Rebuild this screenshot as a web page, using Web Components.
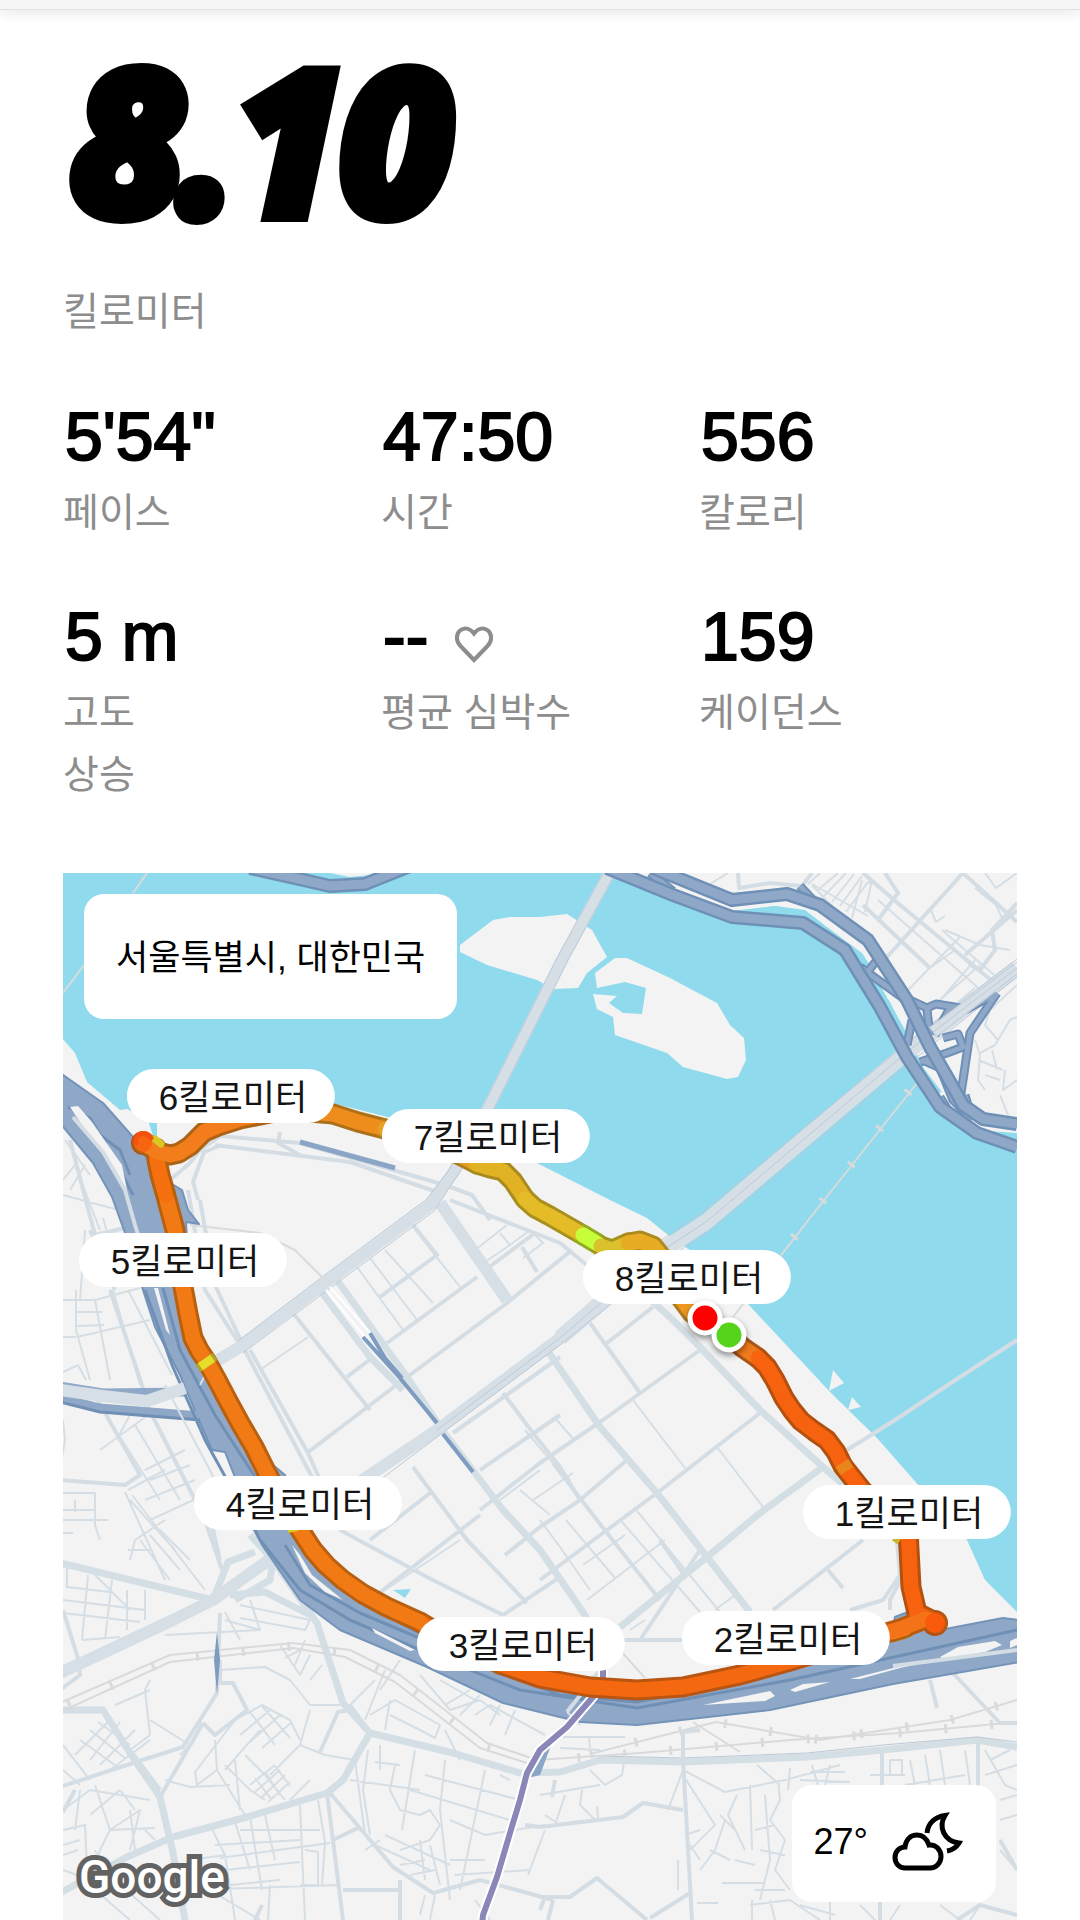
<!DOCTYPE html>
<html lang="ko">
<head>
<meta charset="utf-8">
<meta name="viewport" content="width=device-width, initial-scale=1">
<title>8.10 킬로미터</title>
<style>
  body {
    margin: 0;
    background: #fff;
    color: #000;
    font-family: "Liberation Sans", "Noto Sans CJK KR", sans-serif;
  }
</style>
</head>
<body>
<run-summary>
  <run-distance unit="킬로미터">8.10</run-distance>
  <stat-grid>
    <run-stat label="페이스">5'54"</run-stat>
    <run-stat label="시간">47:50</run-stat>
    <run-stat label="칼로리">556</run-stat>
    <run-stat label="고도&#10;상승">5 m</run-stat>
    <run-stat label="평균 심박수">--<heart-icon slot="icon"></heart-icon></run-stat>
    <run-stat label="케이던스">159</run-stat>
  </stat-grid>
  <route-map>
    <km-pin x="907" y="1512">1킬로미터</km-pin>
    <km-pin x="786" y="1638">2킬로미터</km-pin>
    <km-pin x="521" y="1644">3킬로미터</km-pin>
    <km-pin x="298" y="1503">4킬로미터</km-pin>
    <km-pin x="183" y="1260">5킬로미터</km-pin>
    <km-pin x="231" y="1096">6킬로미터</km-pin>
    <km-pin x="486" y="1136">7킬로미터</km-pin>
    <km-pin x="687" y="1277">8킬로미터</km-pin>
    <map-card slot="place">서울특별시, 대한민국</map-card>
    <map-card slot="weather">27°<weather-icon></weather-icon></map-card>
  </route-map>
</run-summary>

<script>
// Page shell
const summaryTemplate = document.createElement('template');
summaryTemplate.innerHTML = `
<style>
  :host {
    display: block;
  }

  .bar {
    height: 9px;
    background: #f6f6f6;
    border-bottom: 1px solid #e2e2e2;
    box-shadow: 0 2px 14px rgba(0, 0, 0, 0.12);
  }

  main {
    padding: 28px 63px 0;
  }
</style>
<header class="bar"></header>
<main><slot></slot></main>
`;

class RunSummary extends HTMLElement {
  constructor() {
    super();
    this.attachShadow({ mode: 'open' });
    this.shadowRoot.appendChild(summaryTemplate.content.cloneNode(true));
  }
}

// Distance headline
const distanceTemplate = document.createElement('template');
distanceTemplate.innerHTML = `
<style>
  :host {
    display: block;
  }

  h1 {
    margin: 0;
    padding-left: 10px;
    font: italic 700 194px/200px "Open Sans", sans-serif;
    -webkit-text-stroke: 18px #000;
  }

  p {
    margin: 44px 0 0;
    font-size: 39px;
    line-height: 60px;
    color: #8d8d8d;
  }
</style>
<h1><slot></slot></h1>
<p class="unit"></p>
`;

class RunDistance extends HTMLElement {
  constructor() {
    super();
    this.attachShadow({ mode: 'open' });
    this.shadowRoot.appendChild(distanceTemplate.content.cloneNode(true));
  }

  connectedCallback() {
    this.shadowRoot.querySelector('.unit').textContent = this.getAttribute('unit');
  }
}

// Grid of figures
const gridTemplate = document.createElement('template');
gridTemplate.innerHTML = `
<style>
  :host {
    display: grid;
    grid-template-columns: repeat(3, 1fr);
    row-gap: 56px;
    margin: 58px 0 67px;
  }
</style>
<slot></slot>
`;

class StatGrid extends HTMLElement {
  constructor() {
    super();
    this.attachShadow({ mode: 'open' });
    this.shadowRoot.appendChild(gridTemplate.content.cloneNode(true));
  }
}

const statTemplate = document.createElement('template');
statTemplate.innerHTML = `
<style>
  :host {
    display: flex;
    flex-direction: column;
    gap: 10px;
  }

  .value {
    display: flex;
    align-items: center;
    gap: 26px;
    height: 72px;
    padding-left: 2px;
    font-size: 68px;
    line-height: 72px;
    -webkit-text-stroke: 2px #000;
  }

  .label {
    font-size: 39px;
    line-height: 62px;
    color: #8d8d8d;
    white-space: pre-line;
  }
</style>
<div class="value"><span><slot></slot></span><slot name="icon"></slot></div>
<div class="label"></div>
`;

class RunStat extends HTMLElement {
  constructor() {
    super();
    this.attachShadow({ mode: 'open' });
    this.shadowRoot.appendChild(statTemplate.content.cloneNode(true));
  }

  connectedCallback() {
    this.shadowRoot.querySelector('.label').textContent = this.getAttribute('label');
  }
}

// Icons
const heartTemplate = document.createElement('template');
heartTemplate.innerHTML = `
<style>
  :host {
    display: block;
    width: 40px;
    height: 40px;
    margin-top: 16px;
  }

  svg {
    display: block;
  }
</style>
<svg width="40" height="40" viewBox="0 0 40 40" fill="none" stroke="#8d8d8d" stroke-width="4" aria-hidden="true">
  <path d="M20 36 L6.500 22 C1.500 17 2 10 6 6.500 C10 3 16 4 20 9.500 C24 4 30 3 34 6.500 C38 10 38.500 17 33.500 22 Z"/>
</svg>
`;

class HeartIcon extends HTMLElement {
  constructor() {
    super();
    this.attachShadow({ mode: 'open' });
    this.shadowRoot.appendChild(heartTemplate.content.cloneNode(true));
  }
}

const weatherTemplate = document.createElement('template');
weatherTemplate.innerHTML = `
<style>
  :host {
    display: block;
  }

  svg {
    display: block;
  }
</style>
<svg width="72" height="60" viewBox="0 0 72 60" fill="none" stroke="#000" stroke-width="5" aria-hidden="true">
  <path d="M13 56 C7 56 3 51 3 45.500 C3 39 8 35 13 35 C14 27 19 23 25 23 C31 23 35 27 37 33 C44 32 49 38 49 44.500 C49 51 44 56 38 56 Z"/>
  <path d="M35 21 C36 11 43 5 53 3.500 C46 15 52 29 67 31 C64 36 61 38 55 39"/>
</svg>
`;

class WeatherIcon extends HTMLElement {
  constructor() {
    super();
    this.attachShadow({ mode: 'open' });
    this.shadowRoot.appendChild(weatherTemplate.content.cloneNode(true));
  }
}

// White card over the map
const cardTemplate = document.createElement('template');
cardTemplate.innerHTML = `
<style>
  :host {
    display: flex;
    align-items: center;
    justify-content: center;
    gap: 24px;
    box-sizing: border-box;
    background: #fff;
    border-radius: 20px;
    font-size: 35px;
    white-space: nowrap;
  }
</style>
<slot></slot>
`;

class MapCard extends HTMLElement {
  constructor() {
    super();
    this.attachShadow({ mode: 'open' });
    this.shadowRoot.appendChild(cardTemplate.content.cloneNode(true));
  }
}

// Bounds of the drawn map area
const MAP = { x: 63, y: 873, width: 954, height: 1047 };

const pinTemplate = document.createElement('template');
pinTemplate.innerHTML = `
<style>
  :host {
    position: absolute;
    transform: translate(-50%, -50%);
    padding: 4px 28px 0 32px;
    border-radius: 27px;
    background: #fff;
    color: #141414;
    font-size: 35px;
    line-height: 50px;
    white-space: nowrap;
  }
</style>
<slot></slot>
`;

class KmPin extends HTMLElement {
  constructor() {
    super();
    this.attachShadow({ mode: 'open' });
    this.shadowRoot.appendChild(pinTemplate.content.cloneNode(true));
  }

  connectedCallback() {
    const x = Number(this.getAttribute('x'));
    const y = Number(this.getAttribute('y'));
    this.style.left = (x - MAP.x) / MAP.width * 100 + '%';
    this.style.top = (y - MAP.y) / MAP.height * 100 + '%';
  }
}

// Route, one entry per pace colour: [fill, edge, points]
const ROUTE = [
  ['#ef7a1c', '#a9561a', '729,1334 742,1347 758,1358'],
  ['#f7620e', '#b3500f', '758,1358 767,1367 775,1380 784,1398 792,1410 801,1421 814,1431 827,1440 836,1452 843,1466 862,1490 885,1512 908,1530 911,1587 917,1613'],
  ['#ee8a16', '#b0801c', '892,1632 905,1628'],
  ['#f7620e', '#b3500f', '917,1613 937,1623'],
  ['#f47318', '#b85a12', '937,1623 925,1619 900,1629 840,1646'],
  ['#f4690f', '#b85512', '840,1646 787,1662 740,1675 683,1687 637,1690 590,1687 540,1678 500,1664'],
  ['#f4690f', '#b85a12', '500,1664 450,1640 420,1622'],
  ['#f27a14', '#b8600f', '420,1622 387,1607 363,1594 343,1580 326,1565 313,1550 300,1530 282,1502 267,1473 254,1447 240,1423 228,1401 217,1380 207,1362 199,1350 193,1338 188,1314 183,1287 175,1230 167,1200'],
  ['#f6700f', '#b3600f', '166,1196 160,1175 157,1160 156,1148 143,1143'],
  ['#f27d1a', '#ad6316', '143,1143 158,1152 170,1155 179,1153 190,1146 204,1132 218,1126 240,1119 285,1110'],
  ['#ee8c1c', '#ad701a', '285,1110 333,1114 358,1122 385,1129'],
  ['#e6a024', '#ad7f1c', '385,1129 440,1145 477,1164'],
  ['#e0b224', '#a98a1e', '477,1164 490,1168 503,1171 513,1181 525,1199'],
  ['#e3bc28', '#a9901e', '525,1199 535,1208 550,1216 583,1235'],
  ['#c6ff3a', '#90ad24', '583,1235 598,1244'],
  ['#dbc22c', '#a3941e', '601,1246 612,1250 628,1243'],
  ['#e8ac24', '#ad8a1e', '628,1243 640,1241 653,1246 664,1260'],
  ['#ee9820', '#ad7a1e', '664,1260 680,1297 692,1313 705,1318']
];

const svgOpen = `viewBox="${MAP.x} ${MAP.y} ${MAP.width} ${MAP.height}" fill="none" stroke-linejoin="round" aria-hidden="true"`;

function routeMarkup() {
  const line = (points, color, width) =>
    `<polyline points="${points}" stroke="${color}" stroke-width="${width}"/>`;
  return ROUTE.map(([, edge, points]) => line(points, edge, 21)).join('')
    + ROUTE.map(([fill, , points]) => line(points, fill, 15)).join('');
}

const mapTemplate = document.createElement('template');
mapTemplate.innerHTML = `
<style>
  :host {
    display: block;
    position: relative;
    overflow: hidden;
  }

  svg {
    display: block;
    width: 100%;
  }

  .ends {
    position: absolute;
    inset: 0;
    filter: drop-shadow(0 3px 3px rgba(0, 0, 0, 0.45));
  }

  .land { fill: #f3f3f3; }
  .water { fill: #8fdaed; }
  .thin { stroke: #d5dee5; stroke-width: 2; }
  .street { stroke: #d4dde4; stroke-width: 4; }
  .road { stroke: #d4dee5; stroke-width: 7; }
  .avenue { stroke: #d6dfe6; stroke-width: 12; }
  .bridge { stroke: #d6dfe6; stroke-width: 16; }
  .edge { stroke: #bdc9d6; stroke-width: 1; }
  .rail { stroke: #d9dadc; stroke-width: 2; }
  .ties { stroke: #d9dadc; stroke-width: 9; stroke-dasharray: 3 43; }
  .hw-edge { stroke: #6f90b6; stroke-width: 14; }
  .hw { stroke: #90a8c8; stroke-width: 9; }
  .ramp-edge { stroke: #6f90b6; stroke-width: 9; }
  .ramp { stroke: #90a8c8; stroke-width: 5; }
  .mass { fill: #90a8c8; stroke: #7393b8; stroke-width: 2; }
  .lane { stroke: #6f8fb5; stroke-width: 3; }

  .google {
    position: absolute;
    left: 16px;
    bottom: 13px;
    font: 500 46px/60px "Roboto", sans-serif;
    color: #fff;
    -webkit-text-stroke: 10px #626262;
    paint-order: stroke fill;
    stroke-linejoin: round;
  }

  slot[name="place"]::slotted(*) {
    position: absolute;
    top: 21px;
    left: 21px;
    height: 125px;
    padding: 0 32px 4px;
  }

  slot[name="weather"]::slotted(*) {
    position: absolute;
    right: 21px;
    bottom: 18px;
    height: 117px;
    padding: 0 32px 4px 22px;
    font-size: 36px;
  }
</style>
<svg ${svgOpen}>
  <rect class="water" x="63" y="873" width="954" height="1047"/>

  <!-- banks and islands -->
  <path class="land" d="M63 1039 L75 1053 L87 1082 L120 1110 L127 1109 L148 1120 L153 1136 L157 1136 L157 1115 L260 1090 L340 1105 L380 1115 L470 1140 L537 1163 L610 1200 L647 1218 L668 1235 L690 1250 L747 1303 L830 1392 L877 1438 L920 1487 L950 1515 L967 1540 L985 1580 L1017 1612 V1920 H63 Z"/>
  <path class="land" d="M613 873 L680 891 L732 911 L775 906 L805 910 L860 953 L880 985 L905 1030 L922 1065 L945 1105 L975 1130 L1017 1133 V873 Z"/>
  <path class="water" d="M735 911 L775 906 L805 911 L862 953 L872 968 L850 955 L805 922 Z M876 984 L890 1002 L906 1035 L903 1046 L880 1005 Z M922 1066 L942 1092 L938 1093 L924 1072 Z"/>
  <path class="land" d="M460 945 L493 920 L510 917 H540 L567 914 L592 930 L607 957 L587 973 L578 988 L553 989 L537 980 L487 965 L460 952 Z"/>
  <path class="land" d="M595 973 L615 958 H627 L670 978 L717 1003 L730 1025 L744 1038 L746 1060 L738 1077 L727 1079 L683 1067 L667 1053 L615 1035 L613 1017 L597 1009 L593 994 L617 996 L609 1003 L623 1013 L642 1014 L646 988 L625 982 L597 988 Z"/>
  <path class="land" d="M833 1370 L844 1383 L829 1391 Z M852 1397 L861 1407 L848 1410 Z M330 873 L350 877 L392 873 Z"/>
  <path class="water" d="M393 1590 L411 1589 L405 1598 Z"/>

  <!-- streets in the north east -->
  <path class="thin" d="M710 884 L728 873 M812 885 L850 925 L887 957 M820 873 L808 884 M818 890 L838 873 M824 896 L846 873 M832 902 L854 874 M840 906 L862 876 M846 912 L868 882 L873 884 M852 918 L862 880 M812 884 L868 916 M865 912 L872 880 M878 900 L992 1000 M908 990 L960 937 M930 1012 L975 960 M940 1000 L980 965 M958 1002 L975 988 M942 930 L1000 980 M930 968 L955 950 L975 970 M945 930 L980 945 L1010 950 M930 908 L936 922 L945 916 M975 888 L996 905 L1003 920 M985 873 L996 888 L1017 873 M990 1010 L985 1025 L998 1040 M1017 985 L990 1010 M975 1040 L980 1055 L978 1080 L985 1090 M980 1053 L995 1045 L1010 1020 L1017 1017 M992 1050 L997 1070 M978 1060 L1003 1070 M985 1075 L1000 1080 M1005 1070 L1003 1090 L1017 1080 M1000 1095 L1008 1115"/>
  <path class="street" d="M863 873 L900 905 L997 985 M963 873 L887 957 M863 905 L930 968 M963 873 L1017 922 M1017 903 L992 930 L995 950 L980 970 M738 873 L739 888 L770 883 L802 886 L812 873 M885 873 L898 893 L878 920 M1017 910 L965 955"/>

  <!-- island blocks -->
  <path class="thin" d="M260 1370 L308 1337 M357 1267 L403 1330 M370 1258 L417 1320 M385 1250 L433 1303 M413 1227 L460 1287 M475 1250 L507 1225 M485 1262 L510 1245 L500 1233 M510 1245 L530 1230 L543 1243 L523 1258 M533 1500 L573 1473 M540 1520 L560 1547 L590 1590 M566 1520 L615 1578 M583 1565 L625 1535 M587 1600 L665 1540 M607 1533 L640 1575 M622 1522 L700 1612 M637 1511 L720 1612 M553 1463 L525 1430 M540 1442 L570 1480 M555 1418 L575 1441 M633 1400 L685 1468 M717 1447 L763 1507 M715 1610 L735 1595 M630 1630 L645 1620 M500 1500 L540 1470 M520 1490 L550 1515 M382 1592 L460 1540"/>
  <path class="street" d="M387 1343 L477 1277 M307 1453 L403 1380 L507 1303 L572 1250 M293 1313 L370 1410 M347 1377 L373 1357 M243 1347 L312 1477 M250 1350 L308 1453 L320 1480 M380 1297 L437 1255 L413 1225 M488 1268 L535 1233 M522 1247 L537 1272 M450 1200 L560 1243 L583 1262 L605 1280 M453 1433 L560 1357 M480 1470 L560 1415 M503 1393 L533 1433 L560 1467 L580 1500 M413 1467 L467 1540 L527 1603 M370 1540 L430 1493 M340 1530 L427 1577 L503 1615 M560 1577 L503 1615 M480 1515 L370 1600 M590 1323 L640 1393 M653 1307 L607 1343 M700 1350 L603 1420 L540 1463 L480 1510 M760 1413 L657 1493 L603 1533 L540 1580 M627 1460 L580 1500 L540 1527 L505 1555 M553 1463 L607 1533 L660 1600 M660 1540 L683 1573 M863 1540 L773 1610 M828 1570 L843 1588 M585 1640 L683 1640 M850 1610 L883 1600 L900 1575 L897 1540 M890 1610 L890 1600 L903 1575 M640 1640 L700 1550"/>
  <path class="road" d="M320 1290 L370 1357 L403 1390 M337 1280 L407 1377 L440 1427 L503 1510 L540 1550 L583 1612 L600 1640 M547 1350 L600 1427 L657 1493 L707 1557 L750 1612 M640 1290 L673 1320 L700 1347 L760 1410 L823 1467 L850 1490 M823 1467 L760 1513 L707 1557 L620 1627"/>
  <path class="street" d="M190 1163 L200 1150 L220 1136 L300 1143 L400 1172 L445 1185 L472 1195 L490 1220 M215 1145 L350 1162 L437 1192 M198 1200 L193 1182 L204 1152 L222 1145 M170 1180 L190 1163 M188 1190 L205 1290 L240 1345 M200 1200 L215 1285 L243 1345 M280 1132 L278 1143 L300 1155"/>
  <path class="avenue" d="M440 1203 L507 1300"/>
  <path class="avenue" d="M611 870 L562 960 L487 1110 L455 1170 L430 1205 L333 1277 L240 1347 L215 1362"/>
  <path class="edge" d="M605 870 L556 960 L481 1110 L449 1170 L427 1199 L330 1271 L238 1341 M617 870 L568 960 L493 1110 L461 1170 L434 1211 L337 1283 L243 1353"/>
  <path class="bridge" d="M1017 968 L907 1052 L706 1222 L660 1252 L560 1338"/>
  <path class="avenue" d="M660 1252 L560 1338 L437 1430 L300 1522"/>
  <path class="edge" d="M1017 959 L907 1043 L700 1214 L654 1245 M1017 977 L912 1061 L711 1230 L668 1258 L560 1345 L437 1437 L360 1495 M1017 968 L907 1052 L706 1222 L660 1252 L560 1338 L437 1430"/>
  <path class="street" d="M1017 1340 L960 1377 L895 1420 L847 1450"/>
  <path class="rail" d="M147 873 L133 893 M84 965 L63 993 M917 1083 L810 1218 L733 1317 M190 1225 L260 1233 L295 1250 L325 1280"/>
  <path class="ties" d="M909 1091 L780 1255"/>
  <path d="M330 1287 L372 1335 M326 1290 L366 1338" stroke="#fff" stroke-width="2"/>
  <path d="M300 1142 L395 1168" stroke="#8aa5c6" stroke-width="5"/>
  <path d="M363 1337 L400 1378 L437 1423 M370 1333 L385 1358 L402 1378 M443 1434 L473 1472" stroke="#7e9bc0" stroke-width="4"/>

  <!-- south west -->
  <path class="thin" d="M65 1140 L90 1175 M63 1180 L75 1165 L100 1230 M85 1165 L70 1190 M63 1195 L115 1209 M103 1218 L108 1235 M85 1230 L80 1300 M63 1300 H95 L140 1288 M76 1290 V1330 L90 1380 M76 1312 H102 M77 1326 L104 1325 M77 1337 L150 1320 M95 1300 L110 1380 M113 1290 L140 1385 M128 1290 L172 1375 M63 1337 H76 M63 1372 L78 1365 L86 1380 M63 1420 L65 1440 L60 1470 M100 1450 L155 1410 M118 1437 L130 1415 M120 1437 L160 1500 M135 1425 L180 1500 M145 1470 L185 1450 M150 1480 L190 1465 M128 1490 L165 1470 M63 1493 H95 V1525 L100 1540 M63 1510 H95 M63 1520 H108 M63 1533 H73 M75 1500 V1512 M130 1500 L175 1550 M125 1492 L165 1580 M132 1495 L205 1590 M145 1500 L195 1480 M150 1520 L200 1497 M130 1560 L135 1540 L165 1520 M128 1550 H150 M140 1540 L170 1580 M150 1535 L180 1570 M160 1530 L190 1560 M67 1565 V1587 L110 1592 M88 1575 L82 1640 M112 1580 L105 1640 M63 1600 L145 1610 M127 1590 V1630 M145 1590 V1620 M95 1575 L130 1610 M63 1613 L140 1622 M82 1640 L120 1637"/>
  <path class="thin" d="M225 1620 L260 1630 L250 1600 M225 1612 L240 1640 M240 1605 L310 1620 L305 1630 L240 1618 M165 1635 L260 1630 M220 1670 L265 1667 L290 1680 L310 1705 H340 M280 1645 L300 1675 L310 1655 M285 1658 L300 1650 M310 1680 L322 1665 M305 1640 L295 1665 M375 1680 L350 1705 M385 1670 L365 1720 M370 1715 L395 1700 L440 1725 L435 1738 L420 1730 L390 1715 M380 1690 L400 1660 M420 1675 L450 1710 L480 1700 L500 1715 M440 1680 L475 1700 M445 1705 L470 1690 M460 1715 L480 1695 M475 1715 L490 1705 L545 1735 M490 1725 L500 1705 M505 1735 L515 1710 M390 1700 L385 1730 M445 1730 L460 1760 M310 1710 L300 1745 M150 1680 L145 1690 L150 1735 M150 1690 L115 1705 M150 1720 L190 1745 L180 1755 M130 1750 L150 1735 M75 1755 L110 1720 M90 1760 L120 1722 M100 1765 L135 1730 M110 1770 L150 1740 M80 1740 L115 1765 M90 1730 L125 1758 M98 1722 L130 1745 M63 1745 L90 1780 M63 1770 L80 1785"/>
  <path class="thin" d="M215 1740 L217 1770 L245 1815 M217 1770 L197 1785 L195 1772 L235 1720 M235 1760 L240 1810 M225 1770 L260 1730 M235 1720 L262 1705 L290 1720 L300 1740 M240 1735 L270 1710 M250 1742 L280 1715 M262 1748 L292 1722 M250 1712 L275 1745 M262 1706 L290 1738 M225 1765 L250 1790 L265 1800 M245 1755 L265 1775 L285 1800 M250 1785 L275 1765 M255 1792 L280 1770 M262 1797 L285 1775 M268 1802 L290 1782 M255 1778 L272 1800 M265 1772 L280 1795 M275 1766 L290 1786 M165 1780 L190 1787 L230 1785 M300 1745 L325 1755 L355 1760 M290 1800 L310 1780 M300 1745 L270 1775"/>
  <path class="thin" d="M63 1810 L90 1790 L150 1800 M80 1790 L75 1830 M95 1785 L110 1830 L100 1850 M63 1830 L85 1825 L87 1870 M63 1845 L80 1840 M63 1855 L78 1850 M90 1815 L120 1790 M110 1830 L140 1810 L130 1850 M110 1830 L155 1828 M120 1790 L135 1810 M95 1850 L105 1875 L130 1870 M130 1810 L135 1850 M145 1830 L155 1840 M90 1880 L100 1850 M115 1880 L160 1920 M95 1890 L130 1920 M63 1870 L90 1880"/>
  <path class="thin" d="M210 1825 L225 1855 L235 1920 M235 1822 L250 1870 M250 1817 L262 1890 M265 1815 L275 1860 M215 1845 L300 1840 M220 1858 L330 1843 M225 1870 L300 1862 M230 1885 L280 1880 M240 1830 H320 M300 1805 L305 1920 M318 1800 L325 1842 L322 1885 M305 1850 L318 1852 V1885 H300 M210 1890 L260 1920 M190 1860 L225 1855 M185 1890 L340 1885 M270 1885 L268 1920 M355 1760 L365 1835 M350 1780 L420 1790 M368 1750 L363 1790 L370 1835 M380 1745 L380 1770 M375 1762 L400 1765 M395 1765 L390 1790 L400 1810 M415 1750 L402 1830 M445 1760 L440 1810 L450 1900 M485 1770 L460 1890 M500 1775 L510 1780 M425 1775 L520 1800 M410 1790 L510 1820 M400 1810 L420 1815 L430 1810 L440 1825 L430 1840 L400 1850 M385 1835 L450 1865 M375 1845 L430 1870 M420 1840 L425 1880 M430 1845 L440 1885 M400 1865 L425 1860 M410 1875 L435 1870 M450 1860 H485 M455 1875 L530 1870 M450 1820 L485 1835 L545 1825 M545 1830 L528 1875 M380 1840 L365 1850 M435 1895 L430 1920 M425 1895 L420 1915 M475 1900 L490 1920"/>
  <path class="street" d="M60 1480 L125 1485 L140 1475 L95 1395 M147 1405 L205 1520 L222 1570 M110 1290 L147 1400 M90 1230 L115 1290 M70 1140 L95 1235 L125 1228 M205 1495 L220 1560 M63 1610 L80 1665 M60 1690 L80 1675 L78 1660 M75 1790 L63 1812 M203 1723 L215 1735 L247 1710 L233 1683 L220 1683 V1660 M320 1752 L338 1712 L350 1710 M130 1750 L160 1790 M333 1840 L360 1827 M370 1733 L350 1705 M255 1920 L262 1905 M400 1880 V1920 M343 1890 H400 M553 1900 L548 1920 M445 1670 L405 1640 M540 1827 L525 1825"/>
  <path class="street" d="M60 1787 L133 1763 L183 1747 L217 1693 L220 1613 M160 1797 L203 1723 M327 1793 L343 1920 M330 1793 L393 1867 L433 1893 L480 1880 L553 1900"/>
  <path class="road" d="M60 1563 L213 1600 M60 1893 L127 1857 L173 1837 L247 1817 L327 1793 L343 1780 L370 1733 M63 1710 H103 L130 1753 L160 1797 L173 1853 L185 1920 M230 1595 L265 1592 L310 1615 M213 1600 L228 1562 L255 1552 M235 1600 L270 1580 L273 1560"/>
  <path class="avenue" d="M60 1673 L173 1620 L213 1600 L273 1557"/>
  <path class="road" d="M250 1535 L273 1560 L317 1623 L343 1703 L370 1733 L453 1753 L520 1773 L560 1772 L600 1760 L683 1762 L807 1757 L883 1750 L977 1740 L1017 1747"/>
  <path class="edge" d="M600 1756 L683 1758 L807 1753 L883 1745 L977 1737 L1017 1742"/>
  <path class="rail" d="M60 1703 L170 1655 L293 1643 L350 1650 L400 1675 L487 1743 L537 1760 L640 1753 L790 1740 L900 1733 L1017 1722 M60 1712 L170 1662 L293 1648 L345 1657 L395 1682 L480 1748 L530 1764 M590 1754 L716 1722 L820 1740 L950 1720 L1017 1700 M620 1650 L645 1678 M693 1722 L740 1752"/>
  <path class="ties" d="M68 1705 L170 1659 L293 1646 L347 1653 L397 1678 L484 1746 L537 1761 L640 1753 L790 1740 L900 1733 L1017 1722 M590 1754 L716 1722 L820 1740 L950 1720 L1017 1700"/>
  <path d="M217 1632 L214 1660 L217 1694 L220 1660 Z" fill="#7e9bc0"/>

  <!-- south east -->
  <path class="thin" d="M555 1737 H625 M589 1737 L590 1748 M560 1748 L600 1750 M590 1770 L605 1785 L622 1775 L624 1762 M540 1795 L600 1785 M565 1795 L555 1825 M582 1790 L580 1805 L595 1820 M545 1815 L560 1825 M597 1806 L598 1818 M683 1775 L715 1825 L690 1850 M683 1770 L725 1792 L785 1780 L840 1765 M668 1810 L683 1770 M757 1765 L780 1785 M750 1785 L752 1850 M737 1795 L728 1815 L745 1850 M725 1820 L715 1850 L700 1870 M720 1815 L735 1830 M700 1830 L685 1835 M710 1850 L730 1860 M678 1860 V1890 M690 1845 L700 1860 M765 1795 L770 1860 L760 1900 M778 1780 L780 1800 L770 1820 L785 1840 L775 1870 L790 1890 M790 1768 L788 1790 M812 1765 L818 1785 M830 1765 L825 1785 M800 1780 L850 1782 M810 1772 L845 1772 M890 1760 V1775 H902 V1760 H890 M870 1775 H905 M910 1760 L915 1785 M925 1755 L930 1785 M940 1750 L945 1785 M905 1785 L965 1775 M965 1750 L970 1785 M985 1750 L1005 1785 L1017 1790 M990 1760 L1010 1750 M985 1775 L1017 1765 M1000 1800 L1017 1795 M1000 1820 L1017 1815 M1000 1850 L1017 1870 M755 1830 L775 1825 M735 1860 L755 1865 M760 1850 L785 1855 M755 1890 H785 M722 1883 H765 M697 1903 H718 M752 1900 V1920 M770 1900 L775 1920 M750 1905 L790 1900 L820 1920 M800 1905 L835 1915 M830 1900 V1920 M860 1905 L875 1920 M900 1905 L890 1920 M940 1905 L960 1920 M980 1905 L970 1920"/>
  <path class="street" d="M683 1732 V1760 M683 1732 L700 1730 M555 1780 L552 1797 M540 1827 L623 1817 L643 1803 L683 1810 M540 1897 H570 L597 1878 L647 1920 M650 1918 L690 1893 M683 1760 L692 1920 M882 1753 V1785 M978 1740 V1790 M930 1680 L937 1708 M950 1670 L1000 1723 H1017 M880 1900 V1920 M957 1920 L980 1905 L1017 1915 M1000 1840 L1017 1870 M540 1910 L545 1897"/>

  <!-- expressways -->
  <path class="hw-edge" d="M250 868 L330 886 L365 884 L410 866"/>
  <path class="hw" d="M250 868 L330 886 L365 884 L410 866"/>
  <path class="ramp-edge" d="M650 873 L673 891 M860 967 L910 1003 M877 960 L865 975 M910 1000 L927 1008 L936 1004 L967 1009 L993 995 M997 993 L970 1033 L960 1100 M912 1020 L907 1045 M927 1010 L930 1035 M950 1008 L935 1035 M943 1038 L958 1034 L963 1047 L947 1053 L920 1062 M922 1060 L940 1068 L953 1100 L972 1120 M940 1097 L948 1110 M800 886 L815 902 M965 1095 L968 1105"/>
  <path class="ramp" d="M650 873 L673 891 M860 967 L910 1003 M877 960 L865 975 M910 1000 L927 1008 L936 1004 L967 1009 L993 995 M997 993 L970 1033 L960 1100 M912 1020 L907 1045 M927 1010 L930 1035 M950 1008 L935 1035 M943 1038 L958 1034 L963 1047 L947 1053 L920 1062 M922 1060 L940 1068 L953 1100 L972 1120 M940 1097 L948 1110 M800 886 L815 902 M965 1095 L968 1105"/>
  <path class="hw-edge" d="M607 868 L673 895 L732 917 L803 923 L845 950 L880 1007 L907 1057 L940 1107 L977 1133 L1017 1147 M653 868 L732 900 L787 894 L820 905 L868 940 L907 1000 L930 1047 L953 1087 L963 1105 L983 1119 L1017 1124"/>
  <path class="hw" d="M607 868 L673 895 L732 917 L803 923 L845 950 L880 1007 L907 1057 L940 1107 L977 1133 L1017 1147 M653 868 L732 900 L787 894 L820 905 L868 940 L907 1000 L930 1047 L953 1087 L963 1105 L983 1119 L1017 1124"/>
  <path class="avenue" d="M1017 968 L933 1032"/>
  <path class="edge" d="M1017 968 L933 1032 M1017 962 L929 1028 M1017 974 L936 1037"/>

  <path class="mass" d="M60 1073 L103 1103 L133 1137 L150 1163 L165 1190 L172 1184 L182 1190 L188 1210 L199 1224 L186 1222 L190 1290 L200 1340 L215 1375 L255 1450 L285 1475 L295 1530 L312 1560 L350 1595 L430 1640 L500 1665 L560 1682 L637 1690 L740 1675 L820 1660 L890 1640 L895 1617 L908 1612 L940 1630 L1003 1618 L1020 1620 V1662 L893 1684 L770 1710 L637 1725 L580 1722 L503 1703 L427 1667 L340 1630 L300 1600 L262 1545 L225 1452 L212 1450 L198 1418 L180 1375 L155 1327 L143 1290 L125 1233 L112 1197 L93 1163 L60 1123 Z"/>
  <path class="hw" d="M60 1386 L103 1393 L187 1392 M60 1398 L100 1408 L200 1416"/>
  <path class="lane" d="M60 1402 L100 1412 L200 1420 M68 1107 L90 1118 L115 1160 L133 1195 M100 1135 L120 1150 L130 1175 M145 1290 L172 1365 L205 1440 L260 1540 L300 1590 L350 1620 L420 1650 L520 1690 L637 1708 L790 1680 L1017 1630 M163 1288 L180 1350 L215 1415 L270 1500 M285 1545 L310 1585 L360 1613 L500 1672 L560 1695 L637 1702 L760 1678"/>
  <path class="land" d="M70 1107 L78 1106 L92 1122 L103 1138 L122 1165 L127 1190 L120 1180 L100 1148 L84 1128 Z M154 1288 L158 1288 L170 1335 L166 1330 Z M292 1545 L300 1555 L312 1575 L343 1600 L325 1592 L305 1573 Z M372 1628 L415 1650 L410 1651 L375 1633 Z M703 1705 L770 1691 L775 1696 L765 1701 Z M790 1690 L803 1684 L830 1682 L795 1692 Z M850 1679 L905 1665 L937 1660 L900 1668 L860 1679 Z M940 1657 L958 1647 L995 1641 L1002 1645 L985 1652 L945 1659 Z M1010 1641 L1017 1638 V1645 L1010 1648 Z"/>
  <path class="street" d="M73 1117 L103 1152 L125 1190 L135 1225 L143 1250 M893 1666 L1017 1650 M567 1712 L600 1670"/>
  <path class="avenue" d="M60 1390 L103 1396 L147 1401 L185 1388"/>
  <path class="thin" d="M165 1385 L215 1480 M205 1375 L200 1385 M580 1725 L567 1712"/>
  <path d="M556 1732 L540 1775 L528 1778 L536 1760 Z" fill="#8aa5c6"/>

  <!-- metro line -->
  <path d="M603 1665 V1680 L593 1697 L567 1727 L540 1750 L527 1773 L520 1800 L510 1833 L497 1877 L483 1915 L482 1925" stroke="#fff" stroke-width="10"/>
  <path d="M603 1665 V1680 L593 1697 L567 1727 L540 1750 L527 1773 L520 1800 L510 1833 L497 1877 L483 1915 L482 1925" stroke="#8a86b8" stroke-width="6"/>

  <!-- the run itself -->
  <circle cx="143" cy="1143" r="12" fill="#b3500f"/>
  <circle cx="935" cy="1623" r="13" fill="#b3500f"/>
  <g stroke-linecap="round">${routeMarkup()}</g>
  <circle cx="143" cy="1143" r="9" fill="#f6650f"/>
  <circle cx="935" cy="1623" r="10" fill="#fa5a0c"/>
  <path d="M155 1139 L161 1144" stroke="#d8c824" stroke-width="7" stroke-linecap="round"/>
  <path d="M136 1143 C134 1134 145 1130 151 1138" stroke="#f6520f" stroke-width="5" stroke-linecap="round"/>
  <path d="M204 1359 L209 1366" stroke="#b0a526" stroke-width="21"/>
  <path d="M204 1359 L209 1366" stroke="#e6dc2c" stroke-width="15"/>
  <path d="M842 1463 L847 1471" stroke="#e8861c" stroke-width="15"/>
  <path d="M288 1531 L298 1529" stroke="#d8c824" stroke-width="4"/>
  <path d="M894 1538 L899 1542" stroke="#c9b62a" stroke-width="6"/>
</svg>
<slot></slot>
<svg class="ends" ${svgOpen}>
  <circle cx="729" cy="1335" r="15" fill="#56d41c" stroke="#fff" stroke-width="5"/>
  <circle cx="705" cy="1318" r="15" fill="#f00" stroke="#fff" stroke-width="5"/>
</svg>
<slot name="place"></slot>
<slot name="weather"></slot>
<span class="google">Google</span>
`;

class RouteMap extends HTMLElement {
  constructor() {
    super();
    this.attachShadow({ mode: 'open' });
    this.shadowRoot.appendChild(mapTemplate.content.cloneNode(true));
  }
}

customElements.define('run-summary', RunSummary);
customElements.define('run-distance', RunDistance);
customElements.define('stat-grid', StatGrid);
customElements.define('run-stat', RunStat);
customElements.define('heart-icon', HeartIcon);
customElements.define('weather-icon', WeatherIcon);
customElements.define('map-card', MapCard);
customElements.define('km-pin', KmPin);
customElements.define('route-map', RouteMap);
</script>
</body>
</html>
